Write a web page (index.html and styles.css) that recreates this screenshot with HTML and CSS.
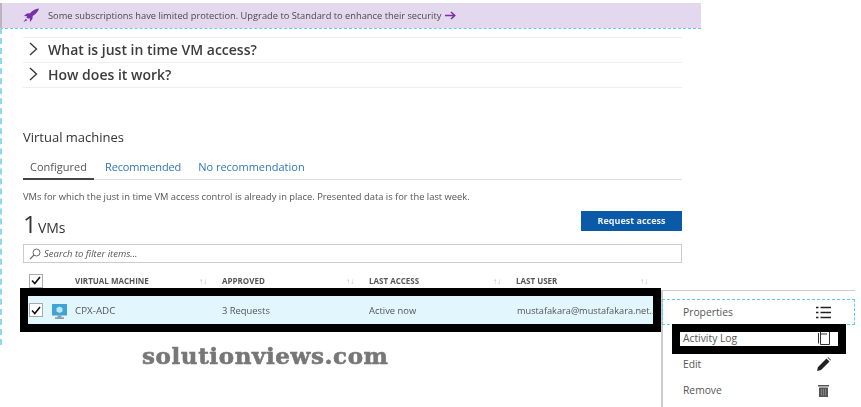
FILE: index.html
```html
<!DOCTYPE html>
<html lang="en">
<head>
<meta charset="utf-8">
<title>Just in time VM access</title>
<link rel="stylesheet" href="styles.css">
</head>
<body>
<div class="page">
  <div class="banner">
    <svg class="rocket" width="17" height="17" viewBox="0 0 18 16"><path d="M17 0.500C12.500 1 9.500 3 7.500 5.500L4 6 1 8.500 4.500 8.700 3.500 10 5.700 11.500 7 10.500 7.500 15 10 11.500 10.300 8.500C13.500 6.500 16 4 17 0.500Z" fill="#7a2fa8"/><path d="M3 11.500L0.500 15 4.500 13Z" fill="#7a2fa8"/></svg>
    <span class="banner-text">Some subscriptions have limited protection. Upgrade to Standard to enhance their security</span>
    <svg class="banner-arrow" width="11" height="9" viewBox="0 0 11 9"><path d="M0 4.500H9.500M6 1L9.800 4.500 6 8" fill="none" stroke="#7a2fa8" stroke-width="1.500"/></svg>
  </div>
  <div class="blade">
    <div class="accordion">
      <div class="acc-row"><svg width="9" height="14" viewBox="0 0 9 14"><path d="M1 1L7.500 7 1 13" fill="none" stroke="#333" stroke-width="1.300"/></svg><span>What is just in time VM access?</span></div>
      <div class="acc-row"><svg width="9" height="14" viewBox="0 0 9 14"><path d="M1 1L7.500 7 1 13" fill="none" stroke="#333" stroke-width="1.300"/></svg><span>How does it work?</span></div>
    </div>
    <h2 class="section-title">Virtual machines</h2>
    <div class="tabs">
      <span class="tab tab-active">Configured</span>
      <span class="tab tab-rec">Recommended</span>
      <span class="tab">No recommendation</span>
    </div>
    <p class="desc">VMs for which the just in time VM access control is already in place. Presented data is for the last week.</p>
    <div class="count-row">
      <div class="count"><span class="count-num">1</span> <span class="count-unit">VMs</span></div>
      <div class="btn">Request access</div>
    </div>
    <div class="search">
      <svg width="12" height="12" viewBox="0 0 12 12"><circle cx="7.500" cy="4.500" r="3.500" fill="none" stroke="#666"/><path d="M5 7L1 11" stroke="#666" stroke-width="1.100"/></svg>
      <span>Search to filter items...</span>
    </div>
    <div class="grid grid-head">
      <span class="check"><svg width="10" height="9" viewBox="0 0 10 9"><path d="M1 4.500L3.800 7.500 9 1" fill="none" stroke="#111" stroke-width="1.600"/></svg></span>
      <span class="col">VIRTUAL MACHINE<i class="sort">↑↓</i></span>
      <span class="col">APPROVED<i class="sort">↑↓</i></span>
      <span class="col">LAST ACCESS<i class="sort">↑↓</i></span>
      <span class="col">LAST USER<i class="sort">↑↓</i></span>
    </div>
    <div class="grid grid-row">
      <span class="check check-row"><svg width="10" height="9" viewBox="0 0 10 9"><path d="M1 4.500L3.800 7.500 9 1" fill="none" stroke="#111" stroke-width="1.600"/></svg></span>
      <span class="cell cell-vm"><svg class="vm-icon" width="15" height="16" viewBox="0 0 15 16"><rect x="0" y="0" width="15" height="11.500" rx="0.500" fill="#3fa3d6"/><path d="M7.500 2.500L10.500 4V7.500L7.500 9 4.500 7.500V4Z" fill="#bfe6f5"/><rect x="5.500" y="11.500" width="4" height="2" fill="#8a9aa3"/><rect x="3" y="13.500" width="9" height="1.200" fill="#6d7b83"/></svg>CPX-ADC</span>
      <span class="cell">3 Requests</span>
      <span class="cell">Active now</span>
      <span class="cell cell-user">mustafakara@mustafakara.net...</span>
    </div>
  </div>
  <div class="frame frame-row"></div>
  <div class="watermark">solutionviews.com</div>
  <div class="menu">
    <div class="menu-item menu-focus"><span>Properties</span>
      <span class="menu-icon"><svg width="15" height="13" viewBox="0 0 15 13"><path d="M0 1.500H2.500M4.500 1.500H15M0 6.500H2.500M4.500 6.500H15M0 11.500H2.500M4.500 11.500H15" stroke="#222" stroke-width="1.500"/></svg></span></div>
    <div class="menu-item"><span>Activity Log</span>
      <span class="menu-icon"><svg width="12" height="14" viewBox="0 0 12 14"><path d="M2.500 .5H11.500V13.500H2.500ZM0.500 2V12.500M2.500 3H9" fill="none" stroke="#333"/></svg></span></div>
    <div class="menu-item"><span>Edit</span>
      <span class="menu-icon"><svg width="14" height="14" viewBox="0 0 14 14"><path d="M0 14L1 10 9.500 1.500 12.500 4.500 4 13ZM10.500 .5L11 0 14 3 13.500 3.500Z" fill="#222"/></svg></span></div>
    <div class="menu-item"><span>Remove</span>
      <span class="menu-icon"><svg width="11" height="13" viewBox="0 0 11 13"><path d="M0 1H11V2.500H0ZM1 3.500H10V13H1Z" fill="#555"/><path d="M3.500 5V11.500M5.500 5V11.500M7.500 5V11.500" stroke="#999" stroke-width=".7"/></svg></span></div>
    <div class="frame frame-menu"></div>
  </div>
</div>
</body>
</html>
```
FILE: styles.css
```css
* { box-sizing: border-box; }
html, body { margin: 0; padding: 0; background: #fff; }
body { font-family: "Open Sans", "Noto Sans", sans-serif; color: #444; }
.page { position: relative; width: 861px; height: 407px; overflow: hidden; padding-top: 3px; filter: blur(0.35px); }

.banner { width: 701px; height: 25px; background: #e4d8ee; border-left: 2px solid #b9b4bd; display: flex; align-items: center; padding-left: 21px; font-size: 9.300px; color: #4a4a4a; }
.rocket { margin-right: 8px; }
.banner-text { white-space: nowrap; }
.banner-arrow { margin-left: 4px; }

.blade { width: 701px; height: 317px; border-top: 1px dashed #5fcbee; border-left: 2px dashed #8fd8f0; padding: 8px 19px 0 21px; }

.accordion { border-top: 1px solid #eee; }
.acc-row { height: 25px; display: flex; align-items: center; gap: 10px; padding: 0 0 2px 6px; border-bottom: 1px solid #eee; font-size: 14px; font-weight: 600; color: #3c3c3c; white-space: nowrap; }

.section-title { margin: 39px 0 0; font-size: 13px; line-height: 20px; font-weight: 500; color: #333; }

.tabs { display: flex; margin-top: 10px; height: 23px; border-bottom: 1px solid #ddd; font-size: 11px; }
.tab { padding: 0 4px 0 11px; line-height: 20px; color: #2f77bd; white-space: nowrap; }
.tab-rec { letter-spacing: -0.150px; padding-right: 6px; }
.tab-active { color: #555; padding: 0 7px; border-bottom: 2px solid #444; height: 23px; width: 71px; }

.desc { margin: 11px 0 0; font-size: 9.350px; line-height: 12px; color: #555; white-space: nowrap; }

.count-row { display: flex; justify-content: space-between; align-items: flex-start; margin-top: 5px; height: 36px; }
.count { padding-top: 1px; line-height: 30px; color: #333; white-space: nowrap; word-spacing: -3px; }
.count-num { font-size: 24px; }
.count-unit { font-size: 14px; }
.btn { margin-top: 3px; width: 101px; height: 20px; background: #0a5aa8; color: #e8f0f8; font-size: 9px; font-weight: 700; line-height: 20px; text-align: center; }

.search { height: 19px; border: 1px solid #ccc; display: flex; align-items: center; gap: 3px; padding-left: 5px; font-size: 9.500px; font-style: italic; color: #555; }

.grid { display: grid; grid-template-columns: 52px 147px 147px 147px 1fr; align-items: center; white-space: nowrap; }
.grid-head { margin-top: 9px; height: 17px; font-size: 8px; font-weight: 700; color: #555; }
.grid-row { margin: 7px 7px 0 5px; height: 28px; background: #e2f6fd; font-size: 9.400px; color: #555; grid-template-columns: 47px 147px 147px 147px 1fr; }
.grid-row .check { margin-left: 1px; }
.col { display: flex; width: 132px; justify-content: space-between; }
.sort { font-style: normal; font-weight: 400; font-size: 8px; color: #bbb; }
.check { width: 14px; height: 14px; margin-left: 6px; border: 1px solid #aaa; background: #fff; display: flex; align-items: center; justify-content: center; }
.cell-vm { position: relative; font-size: 9.800px; }
.cell-user { font-size: 9.200px; padding-left: 1px; }
.vm-icon { position: absolute; left: -23px; top: 0; }

.frame { position: absolute; border: 8px solid #000; pointer-events: none; }
.frame-row { left: 20px; top: 288px; width: 641px; height: 44px; }
.frame-menu { left: 9px; top: 33px; width: 174px; height: 30px; }

.watermark { position: absolute; left: 142px; top: 343px; font-family: "DejaVu Serif", serif; font-size: 23px; line-height: 26px; font-weight: 700; color: #777; letter-spacing: 0.600px; -webkit-text-stroke: 0.600px #777; white-space: nowrap; }

.menu { position: absolute; left: 661px; top: 290px; width: 194px; height: 117px; background: #fff; border-top: 1px solid #ccc; border-left: 2px solid #ccc; padding-top: 8px; font-size: 10.300px; color: #555; }
.menu-item { height: 26px; display: flex; align-items: center; justify-content: space-between; padding: 0 24px 0 20px; }
.menu-focus { border: 1px dashed #5fcbee; margin-left: -1px; padding: 0 23px 0 20px; }
.menu-icon { width: 15px; display: flex; justify-content: center; }
```
